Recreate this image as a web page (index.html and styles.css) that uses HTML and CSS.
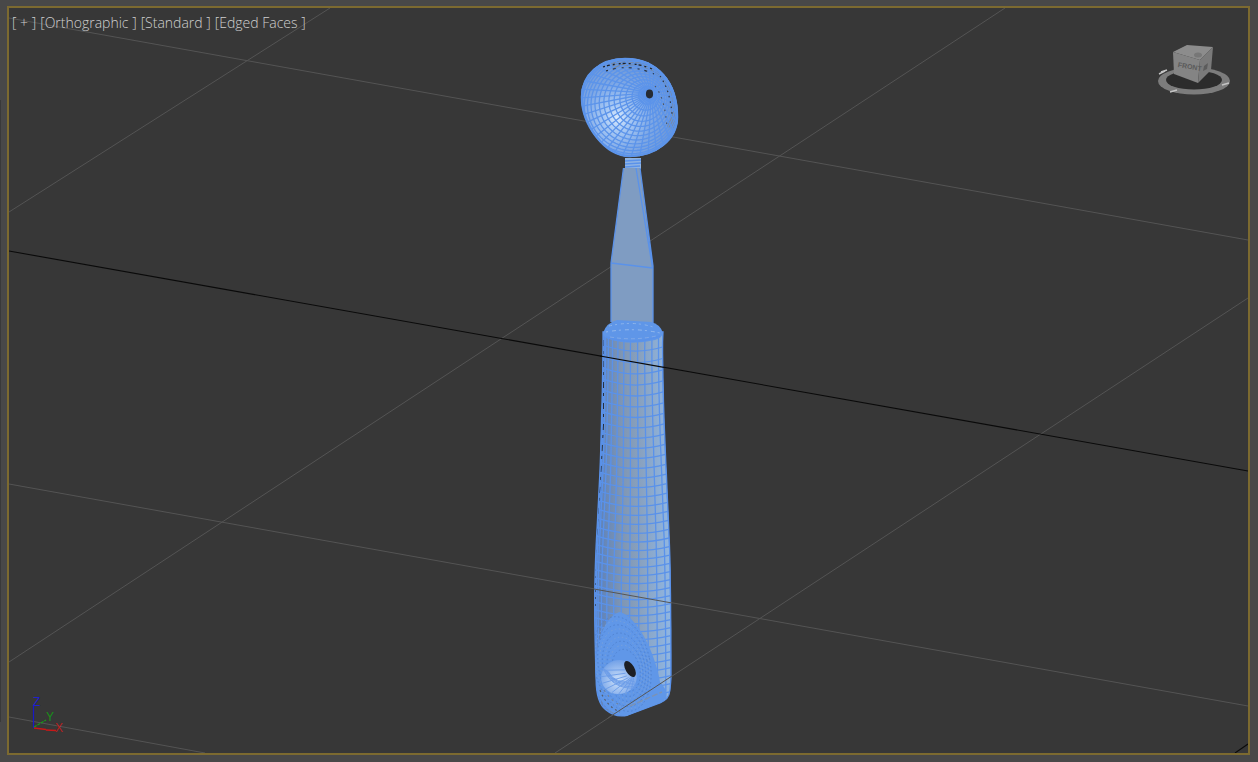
FILE: index.html
```html
<!DOCTYPE html>
<html lang="en">

<head>
  <meta charset="UTF-8">
  <meta name="viewport" content="width=device-width, initial-scale=1.0">
  <title>Perspective Viewport</title>
  <link rel="stylesheet" href="styles.css">
</head>

<body>
  <div class="side-edge"></div>
  <div class="viewport">
    <div class="labels">
      <span>[ + ]</span>
      <span>[Orthographic ]</span>
      <span>[Standard ]</span>
      <span>[Edged Faces ]</span>
    </div>

    <svg class="scene" viewBox="9 8 1239 745" xmlns="http://www.w3.org/2000/svg">
      <defs>
        <radialGradient id="scoopFill" gradientUnits="userSpaceOnUse" cx="617" cy="118" r="62">
          <stop offset="0" stop-color="#dcebfd" />
          <stop offset="0.2" stop-color="#a9caf5" />
          <stop offset="0.55" stop-color="#7ea8e6" />
          <stop offset="1" stop-color="#6d94cf" />
        </radialGradient>
        <linearGradient id="handleFill" gradientUnits="userSpaceOnUse" x1="600" y1="0" x2="670" y2="0">
          <stop offset="0" stop-color="#5f83ba" />
          <stop offset="0.3" stop-color="#7e95b3" />
          <stop offset="0.55" stop-color="#88a0bd" />
          <stop offset="1" stop-color="#90b6e2" />
        </linearGradient>
        <radialGradient id="holeFill" gradientUnits="userSpaceOnUse" cx="617" cy="680" r="22">
          <stop offset="0" stop-color="#cfe2fa" />
          <stop offset="1" stop-color="#6b9ce6" />
        </radialGradient>
        <clipPath id="handleClip">
          <path id="handleClipPath" d="" />
        </clipPath>
        <clipPath id="scoopClip">
          <path d="M625 58C658 58 678 82 678 117C678 140 655 157 630 157C605 157 581 125 581 97C581 75 600 58 625 58Z" />
        </clipPath>
      </defs>

      <!-- grid, behind the model -->
      <g class="grid">
        <line x1="9" y1="18" x2="1248" y2="240" />
        <line x1="9" y1="484" x2="1248" y2="706" />
        <line x1="9" y1="717" x2="205" y2="753" />
        <line x1="9" y1="212" x2="330" y2="8" />
        <line x1="9" y1="662" x2="1005" y2="8" />
        <line x1="555" y1="753" x2="1248" y2="298" />
      </g>
      <line class="axis" x1="9" y1="251" x2="1248" y2="471" />
      <line class="axis" x1="1235" y1="753" x2="1248" y2="744" />

      <!-- scoop -->
      <g id="scoop">
        <path d="M625 58C658 58 678 82 678 117C678 140 655 157 630 157C605 157 581 125 581 97C581 75 600 58 625 58Z" fill="url(#scoopFill)" />
        <g id="scoopMesh" clip-path="url(#scoopClip)"></g>
        <path class="wire-thick" d="M625 59C657 59 677 82 677 117C677 140 655 156 630 156C605 156 582 125 582 97C582 75 600 59 625 59Z" />
        <ellipse cx="649.5" cy="94" rx="3.6" ry="4.4" fill="#262b33" />
      </g>

      <!-- neck and blade -->
      <path d="M625 158H641V169H625Z" fill="#8fb4e4" />
      <path class="wire" d="M625 161L641 160M625 164L641 163M625 167L640 166" />
      <path d="M623.5 168L640 168L653 266V325L611 322V263Z" fill="#7f9cc2" />
      <path class="wire" d="M623.5 168L611 263V322M640 168L653 266V325M636 168L652.5 268M611 263L653 268" />

      <!-- handle -->
      <path id="handleBody" fill="url(#handleFill)" d="" />
      <g id="handleMesh" clip-path="url(#handleClip)"></g>
      <path id="handleEdge" class="wire" d="" />

      <!-- collar -->
      <path d="M603 333Q606 323 617 320L651 322Q660 324 663 333Q662 338 655 340Q630 346 609 339Q603 337 603 333Z" fill="#5f96e8" />
      <g id="collarMesh"></g>

      <!-- lanyard hole bulge -->
      <path id="bulge" fill="#6097e8" d="M620 612C610 614 600 630 597 652C594 668 595 684 600 698C606 710 616 716 626 716L662 702C668 698 668 690 660 682C657 660 640 618 620 612Z" />
      <g id="bulgeMesh" clip-path="url(#handleClip)"></g>
      <ellipse cx="619" cy="677" rx="18" ry="17" fill="url(#holeFill)" transform="rotate(-20 619 677)" />
      <g id="holeMesh"></g>
      <ellipse cx="630" cy="669" rx="4.4" ry="9" fill="#1d1f24" transform="rotate(-30 630 669)" />

      <!-- lines the model does not hide -->
      <line class="axis" x1="600" y1="356" x2="664" y2="367.4" />
      <line class="grid-over" x1="594" y1="589" x2="672" y2="603" />
      <line class="grid-over" x1="608" y1="718" x2="672" y2="676" />

      <!-- world axis -->
      <g class="tripod">
        <line class="axis-z" x1="33.5" y1="728" x2="33.5" y2="705" />
        <line class="axis-y" x1="34" y1="727" x2="46" y2="720" stroke-dasharray="3 1" />
        <path class="axis-x" d="M34 728L46 729.5" />
        <path class="axis-x" d="M46 730L56 730.5" />
        <text class="axis-z-label" x="33" y="706">Z</text>
        <text class="axis-y-label" x="46" y="721">Y</text>
        <text class="axis-x-label" x="55" y="732">X</text>
      </g>

      <!-- view cube -->
      <g class="cube">
        <ellipse cx="1194" cy="81" rx="36" ry="13.5" fill="#7c7c7c" />
        <ellipse cx="1194" cy="80" rx="28" ry="9.5" fill="#2c2c2c" />
        <path d="M1173 52L1187 45L1213 47L1200 60Z" fill="#8c8c8c" />
        <path d="M1173 52L1200 60L1198 83L1174 74Z" fill="#848484" />
        <path d="M1200 60L1213 47L1211 70L1198 83Z" fill="#7a7a7a" />
        <text class="cube-label" transform="translate(1177.5 67) rotate(10)">FRONT</text>
        <path d="M1204 66L1208 63L1207 69L1203 71Z" fill="#5c5c5c" />
        <ellipse cx="1198" cy="55" rx="4" ry="2.5" fill="#777" />
        <path class="cube-mark" d="M1161 72L1167 70M1159 74L1165 71M1222 85L1229 83M1170 92L1177 90" />
      </g>
    </svg>
  </div>
  <script src="scene.js"></script>
</body>

</html>
```

FILE: styles.css
```css
html, body {
  margin: 0;
  height: 100%;
  overflow: hidden;
}

body {
  background-color: #484848;
  font-family: "Open Sans", "Noto Sans", sans-serif;
  padding: 6px 8px 7px 7px;
  box-sizing: border-box;
}

.side-edge {
  position: absolute;
  left: 0;
  top: 100px;
  width: 1px;
  height: 622px;
  background-color: #393939;
}

.viewport {
  position: relative;
  height: 100%;
  box-sizing: border-box;
  border: 2px solid #7c6a30;
  background-color: #373737;
  overflow: hidden;
}

.labels {
  position: absolute;
  left: 3px;
  top: 6px;
  display: flex;
  gap: 4px;
  color: #cfcfcf;
  font-size: 14px;
  font-weight: 300;
  line-height: 18px;
  white-space: nowrap;
}

.scene {
  display: block;
  width: 100%;
  height: 100%;
}

/* grid */
.grid line {
  stroke: #545454;
  stroke-width: 1;
}

.axis {
  stroke: #0a0a0a;
  stroke-width: 1.1;
}

.grid-over {
  stroke: #565656;
  stroke-width: 1;
}

/* model */
.wire {
  fill: none;
  stroke: #5a92ea;
  stroke-width: 1.3;
}

.wire-thick {
  fill: none;
  stroke: #5c94ea;
  stroke-width: 2.5;
}

/* tripod */
.axis-z {
  stroke: #1818c8;
  stroke-width: 1.2;
}

.axis-y {
  stroke: #15a015;
  stroke-width: 1.2;
}

.axis-x {
  fill: none;
  stroke: #c81818;
  stroke-width: 1.4;
}

.tripod text {
  font-family: "Liberation Sans", sans-serif;
  font-size: 12px;
}

.axis-z-label {
  fill: #2020d0;
}

.axis-y-label {
  fill: #189018;
}

.axis-x-label {
  fill: #b82020;
}

/* view cube */
.cube-label {
  font-family: "Liberation Sans", sans-serif;
  font-size: 7px;
  font-weight: 700;
  fill: #5a5a5a;
}

.cube-mark {
  fill: none;
  stroke: #c4c4c4;
  stroke-width: 1.4;
}
```

FILE: scene.js
```js
const NS = 'http://www.w3.org/2000/svg';

function addPath(parent, d, stroke, width, extra) {
  const p = document.createElementNS(NS, 'path');
  p.setAttribute('d', d);
  p.setAttribute('fill', 'none');
  p.setAttribute('stroke', stroke);
  p.setAttribute('stroke-width', width);
  if (extra) p.setAttribute('stroke-dasharray', extra);
  parent.appendChild(p);
  return p;
}

function lerp(a, b, t) {
  return a + (b - a) * t;
}

// piecewise outline lookup, pts are [y, x]
function sample(pts, y) {
  for (let i = 1; i < pts.length; i++) {
    if (y <= pts[i][0]) {
      const t = (y - pts[i - 1][0]) / (pts[i][0] - pts[i - 1][0]);
      return lerp(pts[i - 1][1], pts[i][1], t);
    }
  }
  return pts[pts.length - 1][1];
}

// same lookup, evened out so the outline has no corners
function smooth(pts, y) {
  return (sample(pts, y - 18) + sample(pts, y - 9) + sample(pts, y) + sample(pts, y + 9) + sample(pts, y + 18)) / 5;
}

// ---- scoop: a funnel from the small hole out to the rim
function buildScoop() {
  const g = document.getElementById('scoopMesh');
  const hole = { x: 649.5, y: 94, r: 4 };
  const rim = { x: 629.5, y: 107.5, r: 54 };
  const rings = 17;
  const spokes = 36;

  function point(s, a) {
    const t = 1 - Math.pow(1 - s, 1.7);
    const cx = lerp(hole.x, rim.x, t);
    const cy = lerp(hole.y, rim.y, t);
    const r = lerp(hole.r, rim.r, t);
    return [cx + r * Math.cos(a), cy + r * Math.sin(a)];
  }

  // shaded band on the far side of the bowl
  addPath(g, 'M612 66A45 45 0 0 1 670 128', '#7d8a9b', 7);

  for (let i = 1; i <= rings; i++) {
    const s = i / rings;
    let d = '';
    for (let k = 0; k <= 72; k++) {
      const q = point(s, (k / 72) * Math.PI * 2);
      d += (k ? 'L' : 'M') + q[0].toFixed(1) + ' ' + q[1].toFixed(1);
    }
    addPath(g, d, '#5c94ea', 1.3);
  }
  for (let j = 0; j < spokes; j++) {
    const a = (j / spokes) * Math.PI * 2;
    const p0 = point(0, a);
    const p1 = point(1, a);
    addPath(g, 'M' + p0.join(' ') + 'L' + p1.join(' '), '#5c94ea', 1.3);
  }

  // dark gaps showing through near the top rim
  addPath(g, 'M603 67Q628 59 652 69', '#1c222c', 1.3, '2 2 3 3 2 4');
  addPath(g, 'M606 71Q630 63 654 74', '#2a3038', 1.1, '2 5 3 6');
  addPath(g, 'M660 76Q670 90 672 114', '#30363e', 1.2, '1.5 4');
  addPath(g, 'M655 86Q665 98 667 128', '#4a525e', 1.1, '1.5 5');
}

// ---- handle: lathe rings and long edges
const leftSide = [[300, 603], [360, 603], [460, 600.5], [520, 597.5], [555, 595.5], [600, 594.5], [640, 595], [680, 596], [760, 600]];
const rightSide = [[300, 663], [360, 662.5], [420, 664], [500, 667.5], [555, 670], [640, 671], [680, 671], [760, 671]];

function buildHandle() {
  let d = 'M603 332';
  for (let y = 342; y <= 678; y += 12) d += 'L' + smooth(leftSide, y).toFixed(1) + ' ' + y;
  d += 'C596 690 598 704 606 710C612 715 620 717 628 715L660 703C666 700 669 698 670 690';
  for (let y = 678; y >= 342; y -= 12) d += 'L' + smooth(rightSide, y).toFixed(1) + ' ' + y;
  d += 'L663 332Z';
  document.getElementById('handleBody').setAttribute('d', d);
  document.getElementById('handleClipPath').setAttribute('d', d);
  document.getElementById('handleEdge').setAttribute('d', d);

  const g = document.getElementById('handleMesh');
  const stops = [0, 0.02, 0.045, 0.09, 0.16, 0.25, 0.35, 0.46, 0.58, 0.7, 0.82, 0.93, 1];

  // long edges
  stops.forEach((u) => {
    let e = '';
    for (let y = 332; y <= 716; y += 6) {
      const x = lerp(smooth(leftSide, y), smooth(rightSide, y), u);
      e += (e ? 'L' : 'M') + x.toFixed(1) + ' ' + (y + 6 * Math.sin(u * Math.PI)).toFixed(1);
    }
    addPath(g, e, '#5a92ea', 1.3);
  });

  // rings, closer together towards the grip
  let y = 345;
  while (y < 712) {
    const l = smooth(leftSide, y);
    const r = smooth(rightSide, y);
    const mid = (l + r) / 2;
    addPath(g, 'M' + l + ' ' + y + 'Q' + mid + ' ' + (y + 11) + ' ' + r + ' ' + (y + 2), '#5a92ea', 1.3);
    y += lerp(11.5, 8, Math.min((y - 345) / 230, 1));
  }

  // dark slivers along the tight left edge
  addPath(g, 'M603.5 340V425L601 470L598 515L595.5 555', '#26303f', 1, '6 5 3 7');
  addPath(g, 'M595.5 555V610', '#26303f', 1, '2 5');
}

function buildCollar() {
  const g = document.getElementById('collarMesh');
  addPath(g, 'M606 337Q632 346 660 336', '#5a92ea', 1.6);
  addPath(g, 'M609 326Q634 320 656 328', '#8db5ec', 1, '3 3 2 4');
  addPath(g, 'M606 332Q634 327 660 333', '#93b9ee', 1, '2 4 4 3');
  addPath(g, 'M610 337Q634 341 656 336', '#7fa9e8', 1, '4 3');
}

// ---- bulge round the lanyard hole
function buildBulge() {
  const g = document.getElementById('bulgeMesh');
  for (let i = 0; i < 9; i++) {
    const t = i / 9;
    const e = document.createElementNS(NS, 'ellipse');
    e.setAttribute('cx', lerp(622, 625, t));
    e.setAttribute('cy', lerp(664, 672, t));
    e.setAttribute('rx', lerp(28, 12, t));
    e.setAttribute('ry', lerp(48, 18, t));
    e.setAttribute('fill', 'none');
    e.setAttribute('stroke', i % 2 ? '#7da3d8' : '#4f7fcb');
    e.setAttribute('stroke-width', 0.8);
    e.setAttribute('stroke-dasharray', '1.5 2.5');
    e.setAttribute('transform', 'rotate(-12 622 664)');
    g.appendChild(e);
  }
  addPath(g, 'M600 690Q606 706 620 712', '#56606f', 1.2, '2 3');
  addPath(g, 'M604 690Q612 702 622 706', '#6f7f96', 1.1, '2 4');
  addPath(g, 'M630 706L662 692', '#7c93b4', 1.4, '6 2');

  const h = document.getElementById('holeMesh');
  for (let i = 0; i < 6; i++) {
    const t = i / 6;
    addPath(h, 'M' + (603 + t * 6) + ' ' + (668 + t * 4) + 'Q' + (612 + t * 4) + ' ' + (690 - t * 5) + ' ' + (636 - t * 2) + ' ' + (688 - t * 10), '#6b9ce8', 0.9);
  }
  for (let i = 0; i < 8; i++) {
    const a = (i / 8) * Math.PI + 0.3;
    addPath(h, 'M' + (630 + 5 * Math.cos(a)) + ' ' + (669 + 9 * Math.sin(a)) + 'L' + (619 + 18 * Math.cos(a + 0.5)) + ' ' + (677 + 17 * Math.sin(a + 0.5)), '#6b9ce8', 0.9);
  }
}

buildScoop();
buildHandle();
buildCollar();
buildBulge();
```
